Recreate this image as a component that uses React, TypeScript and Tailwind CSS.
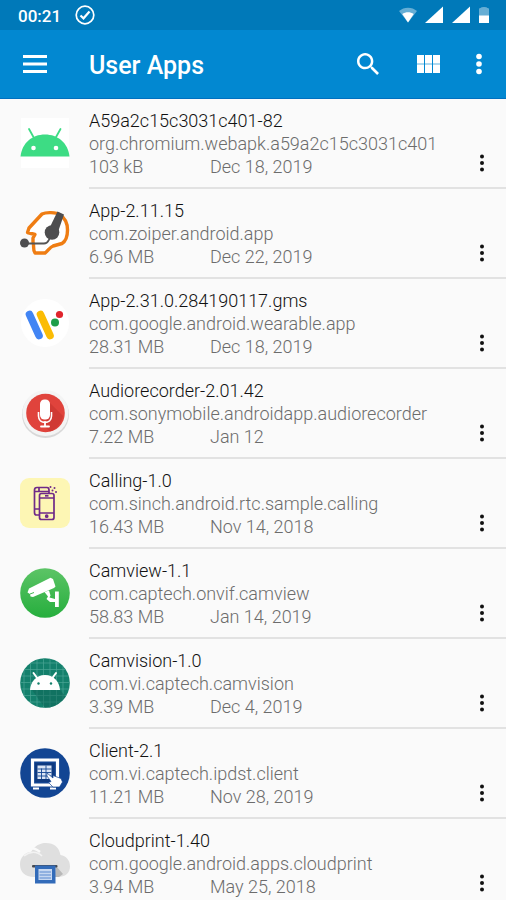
import { FC, ReactNode } from "react";

interface AppInfo {
  name: string;
  packageName: string;
  size: string;
  date: string;
  icon: ReactNode;
}

const IconFrame: FC<{ children: ReactNode }> = ({ children }) => (
  <svg viewBox="0 0 50 50" className="h-[50px] w-[50px] shrink-0" aria-hidden="true">
    {children}
  </svg>
);

const AndroidIcon = () => (
  <IconFrame>
    <rect width="48" height="50" x="1" fill="#fff" />
    <path d="M0.500 38.500C2 25 12 16.500 25 16.500S48 25 49.500 38.500Z" fill="#3ddc84" />
    <path d="M9 11l5 9M40.500 11l-5 9" stroke="#3ddc84" strokeWidth="1.800" strokeLinecap="round" />
    <circle cx="13.500" cy="30" r="2.300" fill="#fff" />
    <circle cx="36" cy="30" r="2.300" fill="#fff" />
  </IconFrame>
);

const HeadsetIcon = () => (
  <IconFrame>
    <path
      d="M22 6C26 4 36 4 40 7C45 10 47.500 16 47.500 22C47.500 29 46 33 42 35.500L33 38C30 39 28 43 25 45H15C12.500 42 14.500 38 13 34V30L15 26.500L7.500 24.500L9 20Z"
      fill="#fff"
      stroke="#ef7d13"
      strokeWidth="3.400"
      strokeLinejoin="round"
    />
    <path d="M4 35.500H24C28 35.500 28 33 30 30" fill="none" stroke="#555" strokeWidth="1.800" />
    <circle cx="4.500" cy="35" r="4.500" fill="#4d4d4f" />
    <circle cx="32" cy="24.500" r="7.300" fill="#4d4d4f" />
    <path d="M37.500 3.500L44 6.500L38 24L29 21Z" fill="#4d4d4f" />
  </IconFrame>
);

const WearIcon = () => (
  <IconFrame>
    <circle cx="25" cy="25" r="24" fill="#fff" />
    <g strokeWidth="7.600" strokeLinecap="round">
      <path d="M20.500 16.500L30 37.500" stroke="#fbbc04" />
      <path d="M9.500 16.500L19 37.500" stroke="#4285f4" />
    </g>
    <circle cx="35" cy="24.500" r="4" fill="#1e9e49" />
    <circle cx="39.500" cy="16.500" r="3.600" fill="#e0242c" />
  </IconFrame>
);

const RecorderIcon = () => (
  <IconFrame>
    <circle cx="25.500" cy="26.500" r="23.500" fill="#d8d8d8" />
    <circle cx="25.500" cy="25" r="23" fill="#f4f4f4" />
    <circle cx="25.500" cy="25" r="19.300" fill="#e0433c" />
    <path d="M30 15L43 28C41 36 36 42 30 43.500L25 39Z" fill="#c5352f" opacity=".6" />
    <rect x="20" y="11.500" width="10" height="20" rx="4.500" fill="#fff" />
    <path d="M18.500 24V28C18.500 36.500 31.500 36.500 31.500 28V24" fill="none" stroke="#fff" strokeWidth="1.600" />
    <path d="M25 34V38M21 38.500H29" stroke="#fff" strokeWidth="1.800" strokeLinecap="round" />
  </IconFrame>
);

const CallingIcon = () => (
  <IconFrame>
    <rect width="50" height="50" rx="9" fill="#fdf6b4" />
    <g fill="none" stroke="#6f2a88" strokeWidth="1.700">
      <path d="M19 37H16.500C15 37 14.500 36 14.500 34.500V12C14.500 10 15.500 9.500 17 9.500H27C28.500 9.500 29 10.500 29 12V15" />
      <path d="M14.500 13.500H29M14.500 31H19M19 13V10" />
      <rect x="19.500" y="15.500" width="14.500" height="26" rx="2" />
      <path d="M19.500 20H34M19.500 35H34" />
      <path d="M25 17.800H28.500" />
      <circle cx="26.700" cy="38.200" r="1" />
    </g>
    <g fill="#6f2a88">
      <circle cx="30.500" cy="9" r="1" />
      <circle cx="34.500" cy="10" r="1" />
      <circle cx="32.500" cy="12.500" r="1" />
      <circle cx="36" cy="14" r="1" />
    </g>
  </IconFrame>
);

const CamviewIcon = () => (
  <IconFrame>
    <defs>
      <linearGradient id="camview-bg" x1="0" y1="0" x2="0" y2="1">
        <stop offset="0" stopColor="#5cc466" />
        <stop offset="1" stopColor="#26ae3d" />
      </linearGradient>
    </defs>
    <circle cx="25" cy="25" r="24.800" fill="url(#camview-bg)" />
    <g fill="#fff">
      <path d="M9 20.500L30.500 9.800L33 11L35.500 18.500L34 20L13 29L10.500 28.500L10 26L7.500 24.500Z" />
      <path d="M24.500 24L29 22.500L30.500 27.500L29.500 29.500L35 31V34H30L26.500 31L28 28.500Z" />
      <rect x="35" y="23.500" width="3.800" height="15.500" />
    </g>
    <path d="M10 26L14 24.500" stroke="#43b853" />
  </IconFrame>
);

const CamvisionIcon = () => (
  <IconFrame>
    <defs>
      <clipPath id="camvision-clip">
        <circle cx="25" cy="25" r="24.800" />
      </clipPath>
    </defs>
    <g clipPath="url(#camvision-clip)">
      <rect width="50" height="50" fill="#14806c" />
      <path
        d="M4 0V50M10.500 0V50M17 0V50M23.500 0V50M30 0V50M36.500 0V50M43 0V50M0 5H50M0 11.500H50M0 18H50M0 24.500H50M0 31H50M0 37.500H50M0 44H50"
        stroke="#4aa595"
        strokeWidth=".7"
      />
      <path d="M12 32H40L47 40L36 50H25Z" fill="#0e6355" opacity=".5" />
    </g>
    <path d="M10 32C10.500 24 16 17 25 17S39.500 24 40 32Z" fill="#fff" />
    <path d="M13.500 15L17.500 20.500M36 15L32 20.500" stroke="#fff" strokeWidth="2" strokeLinecap="round" />
    <circle cx="18.500" cy="25.500" r="1.200" fill="#14806c" />
    <circle cx="31" cy="25.500" r="1.200" fill="#14806c" />
  </IconFrame>
);

const ClientIcon = () => (
  <IconFrame>
    <circle cx="25" cy="25" r="24.800" fill="#124593" />
    <path d="M12.500 12H37.500V37H12.500Z" fill="none" stroke="#fff" strokeWidth="3.200" />
    <path d="M13 40.500H19M30 40.500H36" stroke="#fff" strokeWidth="2" />
    <rect x="15" y="15" width="19.500" height="19" fill="#0e3a80" />
    <rect x="17.500" y="17.500" width="14" height="13.500" fill="#dbe5f5" />
    <path d="M17.500 21H31.500M17.500 24.500H31.500M17.500 28H31.500M21.500 20.500V31M26 17.500V31" stroke="#124593" strokeWidth=".9" />
    <path
      d="M27 25L33 30V27.500L41 30.500L42.500 34L39.500 39H33L28.500 34.500L31 33.500L27 28Z"
      fill="#fff"
      stroke="#124593"
      strokeWidth=".7"
    />
  </IconFrame>
);

const CloudprintIcon = () => (
  <IconFrame>
    <path
      d="M14 39C5 39 0 34 0 26.500C0 19 5 14.500 11 14C15 7.500 20 5 26 5C34 5 39 9 40.500 17C46 18 50 22 50 28.500C50 35 45 39 38 39Z"
      fill="#dfdfdf"
    />
    <path d="M0 14C7 8.500 14 9 20 14" fill="none" stroke="#fafafa" strokeWidth="2.400" />
    <path d="M4 18C10 13 17 13 22 18" fill="none" stroke="#f3f3f3" strokeWidth="1.600" />
    <path d="M36 28L43 36L39 39H35Z" fill="#b8b8b8" />
    <rect x="12" y="27" width="25.500" height="2.500" rx="1" fill="#454a52" />
    <rect x="15" y="27.500" width="20.500" height="18" fill="#326bb9" />
    <rect x="18.500" y="31" width="13.500" height="11" fill="#c6d7f1" />
    <path d="M19.500 34H31M19.500 37H31M19.500 40H31" stroke="#5b8ad0" strokeWidth="1.100" />
  </IconFrame>
);

const apps: AppInfo[] = [
  {
    name: "A59a2c15c3031c401-82",
    packageName: "org.chromium.webapk.a59a2c15c3031c401",
    size: "103 kB",
    date: "Dec 18, 2019",
    icon: <AndroidIcon />,
  },
  {
    name: "App-2.11.15",
    packageName: "com.zoiper.android.app",
    size: "6.96 MB",
    date: "Dec 22, 2019",
    icon: <HeadsetIcon />,
  },
  {
    name: "App-2.31.0.284190117.gms",
    packageName: "com.google.android.wearable.app",
    size: "28.31 MB",
    date: "Dec 18, 2019",
    icon: <WearIcon />,
  },
  {
    name: "Audiorecorder-2.01.42",
    packageName: "com.sonymobile.androidapp.audiorecorder",
    size: "7.22 MB",
    date: "Jan 12",
    icon: <RecorderIcon />,
  },
  {
    name: "Calling-1.0",
    packageName: "com.sinch.android.rtc.sample.calling",
    size: "16.43 MB",
    date: "Nov 14, 2018",
    icon: <CallingIcon />,
  },
  {
    name: "Camview-1.1",
    packageName: "com.captech.onvif.camview",
    size: "58.83 MB",
    date: "Jan 14, 2019",
    icon: <CamviewIcon />,
  },
  {
    name: "Camvision-1.0",
    packageName: "com.vi.captech.camvision",
    size: "3.39 MB",
    date: "Dec 4, 2019",
    icon: <CamvisionIcon />,
  },
  {
    name: "Client-2.1",
    packageName: "com.vi.captech.ipdst.client",
    size: "11.21 MB",
    date: "Nov 28, 2019",
    icon: <ClientIcon />,
  },
  {
    name: "Cloudprint-1.40",
    packageName: "com.google.android.apps.cloudprint",
    size: "3.94 MB",
    date: "May 25, 2018",
    icon: <CloudprintIcon />,
  },
];

const StatusBar = () => (
  <div className="flex h-[30px] items-center bg-[#0079b9] pl-[18px] pr-4 text-white">
    <span className="pt-0.5 text-[17px] font-medium leading-5">00:21</span>
    <svg viewBox="0 0 20 20" className="ml-3.5 h-5 w-5" fill="none" stroke="currentColor" aria-hidden="true">
      <circle cx="10" cy="10" r="8.800" strokeWidth="1.700" />
      <path d="M5.500 10.500L8.500 13.300L14.500 6.500" strokeWidth="2.200" />
    </svg>
    <div className="ml-auto flex items-center gap-2">
      <svg viewBox="0 0 18 18" className="h-[18px] w-[18px]" fill="currentColor" aria-hidden="true">
        <path d="M0 5C5 0.500 13 0.500 18 5L9 16.500Z" opacity=".4" />
        <path d="M3.300 8C6.500 5.500 11.500 5.500 14.700 8L9 16.500Z" />
      </svg>
      <svg viewBox="0 0 18 18" className="h-[18px] w-[18px]" fill="currentColor" aria-hidden="true">
        <path d="M18 0.500V17H0Z" />
      </svg>
      <svg viewBox="0 0 18 18" className="ml-px h-[18px] w-[18px]" fill="currentColor" aria-hidden="true">
        <path d="M18 0.500V17H0Z" />
      </svg>
      <svg viewBox="0 0 12 18" className="h-[18px] w-3" fill="currentColor" aria-hidden="true">
        <path d="M1 3Q1 2 2.500 2Q3 1 6 1T9.500 2Q11 2 11 3V10H1Z" opacity=".4" />
        <path d="M1 9.500H11V17H1Z" />
      </svg>
    </div>
  </div>
);

const AppBar = () => (
  <header className="flex h-[69px] items-center border-b border-[#0070c0] bg-[#0288d1] text-white">
    <button type="button" aria-label="Open menu" className="ml-[11px] flex h-12 w-12 items-center justify-center">
      <svg viewBox="0 0 24 18" className="h-[18px] w-6" fill="currentColor" aria-hidden="true">
        <path d="M0 0H24V3H0ZM0 7.500H24V10.500H0ZM0 15H24V18H0Z" />
      </svg>
    </button>
    <h1 className="ml-[30px] pt-1 text-[25px] font-medium leading-8">User Apps</h1>
    <div className="ml-auto flex items-center">
      <button type="button" aria-label="Search" className="flex h-12 w-12 items-center justify-center">
        <svg viewBox="3 3 17.500 17.500" className="h-[22px] w-[22px]" fill="currentColor" aria-hidden="true">
          <path d="M15.500 14h-.79l-.28-.27C15.410 12.590 16 11.110 16 9.500 16 5.910 13.090 3 9.500 3S3 5.910 3 9.500 5.910 16 9.500 16c1.610 0 3.090-.59 4.230-1.570l.27.28v.79l5 4.990L20.490 19l-4.990-5zm-6 0C7.010 14 5 11.990 5 9.500S7.010 5 9.500 5 14 7.010 14 9.500 11.990 14 9.500 14z" />
        </svg>
      </button>
      <button type="button" aria-label="Grid view" className="ml-3 flex h-12 w-12 items-center justify-center">
        <svg viewBox="0 0 23 18" className="h-[18px] w-[23px]" fill="currentColor" aria-hidden="true">
          <path d="M0 0H7V8.500H0ZM8 0H15V8.500H8ZM16 0H23V8.500H16ZM0 9.500H7V18H0ZM8 9.500H15V18H8ZM16 9.500H23V18H16Z" />
          <path d="M0 8.500H7V9.500H0ZM8 8.500H15V9.500H8ZM16 8.500H23V9.500H16Z" opacity=".7" />
        </svg>
      </button>
      <button type="button" aria-label="More options" className="ml-[3px] mr-[3px] flex h-12 w-12 items-center justify-center">
        <svg viewBox="0 0 6 22" className="h-[22px] w-1.5" fill="currentColor" aria-hidden="true">
          <circle cx="3" cy="3.500" r="2.800" />
          <circle cx="3" cy="11" r="2.800" />
          <circle cx="3" cy="18.500" r="2.800" />
        </svg>
      </button>
    </div>
  </header>
);

const AppRow: FC<{ app: AppInfo }> = ({ app }) => (
  <li className="flex h-[90px] shrink-0 pl-5">
    <div className="pt-[19px]">{app.icon}</div>
    <div className="ml-[19px] flex min-w-0 flex-1 border-b-2 border-[#e2e2e2] pt-2.5">
      <div className="min-w-0 flex-1 text-[18px] font-light leading-[23px] text-[#6c6c6c]">
        <h2 className="truncate text-[#111]">{app.name}</h2>
        <p className="truncate">{app.packageName}</p>
        <p className="flex">
          <span className="w-[121px]">{app.size}</span>
          <span>{app.date}</span>
        </p>
      </div>
      <button
        type="button"
        aria-label={`Options for ${app.name}`}
        className="mr-2 flex w-8 items-end justify-center pb-[15px]"
      >
        <svg viewBox="0 0 4 18" className="h-[18px] w-1" fill="#111" aria-hidden="true">
          <circle cx="2" cy="2.500" r="2" />
          <circle cx="2" cy="9" r="2" />
          <circle cx="2" cy="15.500" r="2" />
        </svg>
      </button>
    </div>
  </li>
);

const App: FC = () => {
  return (
    <div className="flex h-screen flex-col bg-[#fafafa] font-['Roboto',sans-serif]">
      <StatusBar />
      <AppBar />
      <main className="min-h-0 flex-1 overflow-y-auto [scrollbar-width:none]">
        <ul className="flex flex-col">
          {apps.map((app) => (
            <AppRow key={app.packageName} app={app} />
          ))}
        </ul>
      </main>
    </div>
  );
};

export default App;
